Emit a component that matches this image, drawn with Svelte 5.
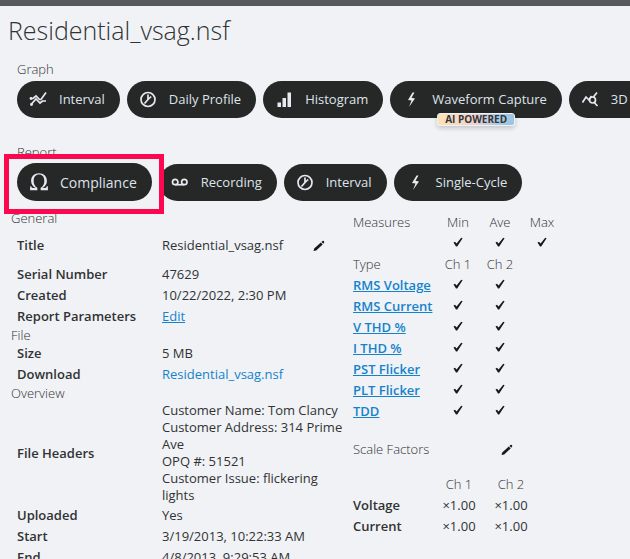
<script>
  const graphs = [
    { icon: 'lines', label: 'Interval' },
    { icon: 'clock', label: 'Daily Profile' },
    { icon: 'bars', label: 'Histogram' },
    { icon: 'bolt', label: 'Waveform Capture', badge: 'AI POWERED' },
    { icon: 'scope', label: '3D' }
  ];
  const reports = [
    { icon: 'omega', label: 'Compliance', focus: true },
    { icon: 'tape', label: 'Recording' },
    { icon: 'clock', label: 'Interval' },
    { icon: 'bolt', label: 'Single-Cycle' }
  ];
  const headers = [
    'Customer Name: Tom Clancy',
    'Customer Address: 314 Prime Ave',
    'OPQ #: 51521',
    'Customer Issue: flickering lights'
  ];
  const types = ['RMS Voltage', 'RMS Current', 'V THD %', 'I THD %', 'PST Flicker', 'PLT Flicker', 'TDD'];
  const scales = ['Voltage', 'Current'];
</script>

{#snippet icon(name)}
  <svg class="icon" class:large={name === 'omega'} viewBox="0 0 18 18" aria-hidden="true">
    {#if name === 'lines'}
      <path d="M2 7.500h2l3-2.500 3.500 3.500h1.500L17 1.500" />
      <path d="M2 13.500L7 8l4 4 2.500-2H17" />
      <circle class="solid" cx="2" cy="7.500" r="1.400" /><circle class="solid" cx="2.500" cy="13.500" r="1.400" />
    {:else if name === 'clock'}
      <circle cx="9" cy="8.500" r="7" />
      <path d="M9 3.500V8.500L5.500 12.500M9 8.500l3.200-3" />
    {:else if name === 'bars'}
      <path class="solid" d="M2.500 11.500h3.500v4.500H2.500zM7.500 7H11v9H7.500zM12.500 1.500H16V16h-3.500z" />
    {:else if name === 'bolt'}
      <path class="solid" d="M10.500 1.500L6 9l3.500.500L7 16l6-8.500-3.500-.700L12.500 1.500z" />
    {:else if name === 'scope'}
      <path d="M1.500 11.500L5 6l3 3 2.500-4M12 6.500L16 1.500M13.200 11.500L16.500 15" />
      <circle cx="11.500" cy="9" r="3" />
    {:else if name === 'omega'}
      <path class="solid" d="M1 12.800h.900q.300 1.500 1.600 1.500h2.400C3.400 12.800 1.900 10.800 1.900 8 1.900 4 4.800 1.200 9 1.200S16.100 4 16.100 8c0 2.800-1.500 4.800-4 6.300h2.400q1.300 0 1.600-1.500h.900V16.500h-6.500v-2.300c2.200-1.300 3.300-3.400 3.300-6.200 0-3.500-1.800-5.700-4.800-5.700S4.200 4.500 4.200 8c0 2.800 1.100 4.900 3.300 6.200v2.300H1z" />
    {:else if name === 'tape'}
      <circle cx="4.200" cy="8" r="2.700" /><circle cx="13.300" cy="8" r="2.700" />
      <path d="M4.200 10.700h9.100" />
    {/if}
  </svg>
{/snippet}

{#snippet check()}
  <svg class="check" viewBox="0 0 10 10" role="img" aria-label="Yes">
    <path d="M.500 5.500L2 4.800l1.600 1.700L8.200.700l1.400.500L4.200 9.500H3z" />
  </svg>
{/snippet}

{#snippet pencil(label)}
  <button class="edit" aria-label={label}>
    <svg viewBox="0 0 12 12" aria-hidden="true">
      <path d="M.500 11L1.200 8.500 7.800 2.500l1.900 1.900-6.500 6zM8.400 2L9.500 1q.700-.400 1.200.100l.400.400q.400.600 0 1.100l-.800 1.200z" />
    </svg>
  </button>
{/snippet}

<div class="page">
  <div class="topbar"></div>
  <h1>Residential_vsag.nsf</h1>

  <section class="actions">
    <h2>Graph</h2>
    <div class="row">
      {#each graphs as g}
        <button class="pill">
          {@render icon(g.icon)}<span>{g.label}</span>
          {#if g.badge}<span class="badge">{g.badge}</span>{/if}
        </button>
      {/each}
    </div>
  </section>

  <section class="actions report">
    <h2>Report</h2>
    <div class="row">
      {#each reports as r}
        {#if r.focus}
          <div class="focus">
            <button class="pill big">{@render icon(r.icon)}<span>{r.label}</span></button>
          </div>
        {:else}
          <button class="pill">{@render icon(r.icon)}<span>{r.label}</span></button>
        {/if}
      {/each}
    </div>
  </section>

  <div class="columns">
    <table class="details">
      <colgroup><col class="c-name" /><col /><col class="c-tool" /></colgroup>
      <tbody>
        <tr class="group"><th colspan="3">General</th></tr>
        <tr class="tall">
          <th>Title</th><td>Residential_vsag.nsf</td>
          <td>{@render pencil('Edit title')}</td>
        </tr>
        <tr><th>Serial Number</th><td colspan="2">47629</td></tr>
        <tr><th>Created</th><td colspan="2">10/22/2022, 2:30 PM</td></tr>
        <tr><th>Report Parameters</th><td colspan="2"><a class="under" href="#edit">Edit</a></td></tr>
        <tr class="group"><th colspan="3">File</th></tr>
        <tr><th>Size</th><td colspan="2">5 MB</td></tr>
        <tr><th>Download</th><td colspan="2"><a href="#download">Residential_vsag.nsf</a></td></tr>
        <tr class="group"><th colspan="3">Overview</th></tr>
        <tr class="multi">
          <th>File Headers</th>
          <td colspan="2">{#each headers as h}<div>{h}</div>{/each}</td>
        </tr>
        <tr><th>Uploaded</th><td colspan="2">Yes</td></tr>
        <tr><th>Start</th><td colspan="2">3/19/2013, 10:22:33 AM</td></tr>
        <tr><th>End</th><td colspan="2">4/8/2013, 9:29:53 AM</td></tr>
      </tbody>
    </table>

    <div class="side">
      <table class="measures">
        <tbody>
          <tr class="light"><th>Measures</th><th>Min</th><th>Ave</th><th>Max</th></tr>
          <tr><td></td><td>{@render check()}</td><td>{@render check()}</td><td>{@render check()}</td></tr>
          <tr class="light"><th>Type</th><th>Ch 1</th><th>Ch 2</th><th></th></tr>
          {#each types as t}
            <tr>
              <th><a class="under" href="#type">{t}</a></th>
              <td>{@render check()}</td><td>{@render check()}</td><td></td>
            </tr>
          {/each}
        </tbody>
      </table>

      <div class="scale-head"><h2>Scale Factors</h2>{@render pencil('Edit scale factors')}</div>
      <table class="scales">
        <tbody>
          <tr class="light"><th></th><th>Ch 1</th><th>Ch 2</th></tr>
          {#each scales as s}
            <tr><th>{s}</th><td>×1.00</td><td>×1.00</td></tr>
          {/each}
        </tbody>
      </table>
    </div>
  </div>
</div>

<style>
  :global(body) { background: #f0f2f6; }
  .page {
    height: 100vh;
    overflow: hidden;
    background: #f0f2f6;
    color: #303234;
    font: 13px/17px "Open Sans", sans-serif;
  }
  .topbar { height: 6px; background: #565a5c; }
  h1 { margin: 6px 0 0 8px; font-size: 25px; line-height: 36px; font-weight: 300; }
  h2 { margin: 0; font-size: 13px; line-height: 17px; font-weight: 300; }
  .actions { padding: 13px 0 0 17px; }
  .report { padding-top: 26px; }
  .row { display: flex; gap: 7px; margin-top: 3px; align-items: flex-start; }
  .pill {
    position: relative;
    flex: none;
    display: flex;
    align-items: center;
    gap: 12px;
    min-width: 96px;
    height: 37px;
    padding: 0 15px 0 12px;
    border: 0;
    border-radius: 19px;
    background: #262827;
    color: #dfe3ea;
    font: 13px/17px "Open Sans", sans-serif;
    white-space: nowrap;
  }
  .badge {
    position: absolute;
    left: 50%;
    bottom: -8px;
    transform: translateX(-50%);
    padding: 0 7px;
    border: 1px solid #eef2f6;
    border-radius: 3px;
    background: linear-gradient(90deg, #fbe3b4, #f3d3cc 45%, #a9cbe4 80%, #9cc4e0);
    box-shadow: 0 2px 5px #0003;
    color: #34363c;
    font-size: 10px;
    line-height: 11px;
    font-weight: 700;
  }
  .focus {
    position: relative;
    z-index: 1;
    margin: -10px -12px -13px -13px;
    padding: 4px 7px 8px 8px;
    border: 5px solid #fb0850;
    background: #f0f2f6;
  }
  .big { gap: 11px; height: 38px; font-size: 14px; }
  .icon { width: 18px; height: 18px; fill: none; stroke: #e6eaf0; stroke-width: 1.700; }
  .icon.large { width: 20px; height: 20px; }
  .solid { fill: #e6eaf0; stroke: none; }
  .columns { display: flex; margin-top: 8px; align-items: flex-start; }
  table { border-collapse: collapse; }
  th, td { height: 21px; padding: 0; text-align: left; vertical-align: middle; }
  th { font-weight: 600; }
  .details { width: 332px; flex: none; margin-left: 11px; table-layout: fixed; }
  .c-name { width: 151px; }
  .c-tool { width: 30px; }
  .details th { padding-left: 6px; }
  .details .group th { height: 16px; padding: 0; line-height: 16px; font-weight: 300; }
  .details .group:first-child th { height: 18px; }
  .details .tall > * { height: 37px; }
  .details .multi > * { height: 104px; }
  .light th { font-weight: 300; }
  a { color: #1583cb; text-decoration: none; }
  .under { text-decoration: underline; }
  .side { margin: 3px 0 0 10px; }
  .measures td, .measures th, .scales td, .scales th { width: 42px; text-align: center; }
  .measures th:first-child { width: 84px; text-align: left; }
  .scales td, .scales th { width: 52px; }
  .scales th:first-child { width: 80px; text-align: left; }
  .check { display: block; width: 10px; height: 10px; margin: -4px auto 0; fill: #17191b; }
  .edit { display: block; padding: 0; border: 0; background: none; }
  .edit svg { display: block; width: 12px; height: 12px; fill: #17191b; }
  .scale-head { display: flex; align-items: center; justify-content: space-between; width: 160px; margin: 19px 0 16px; }
</style>
